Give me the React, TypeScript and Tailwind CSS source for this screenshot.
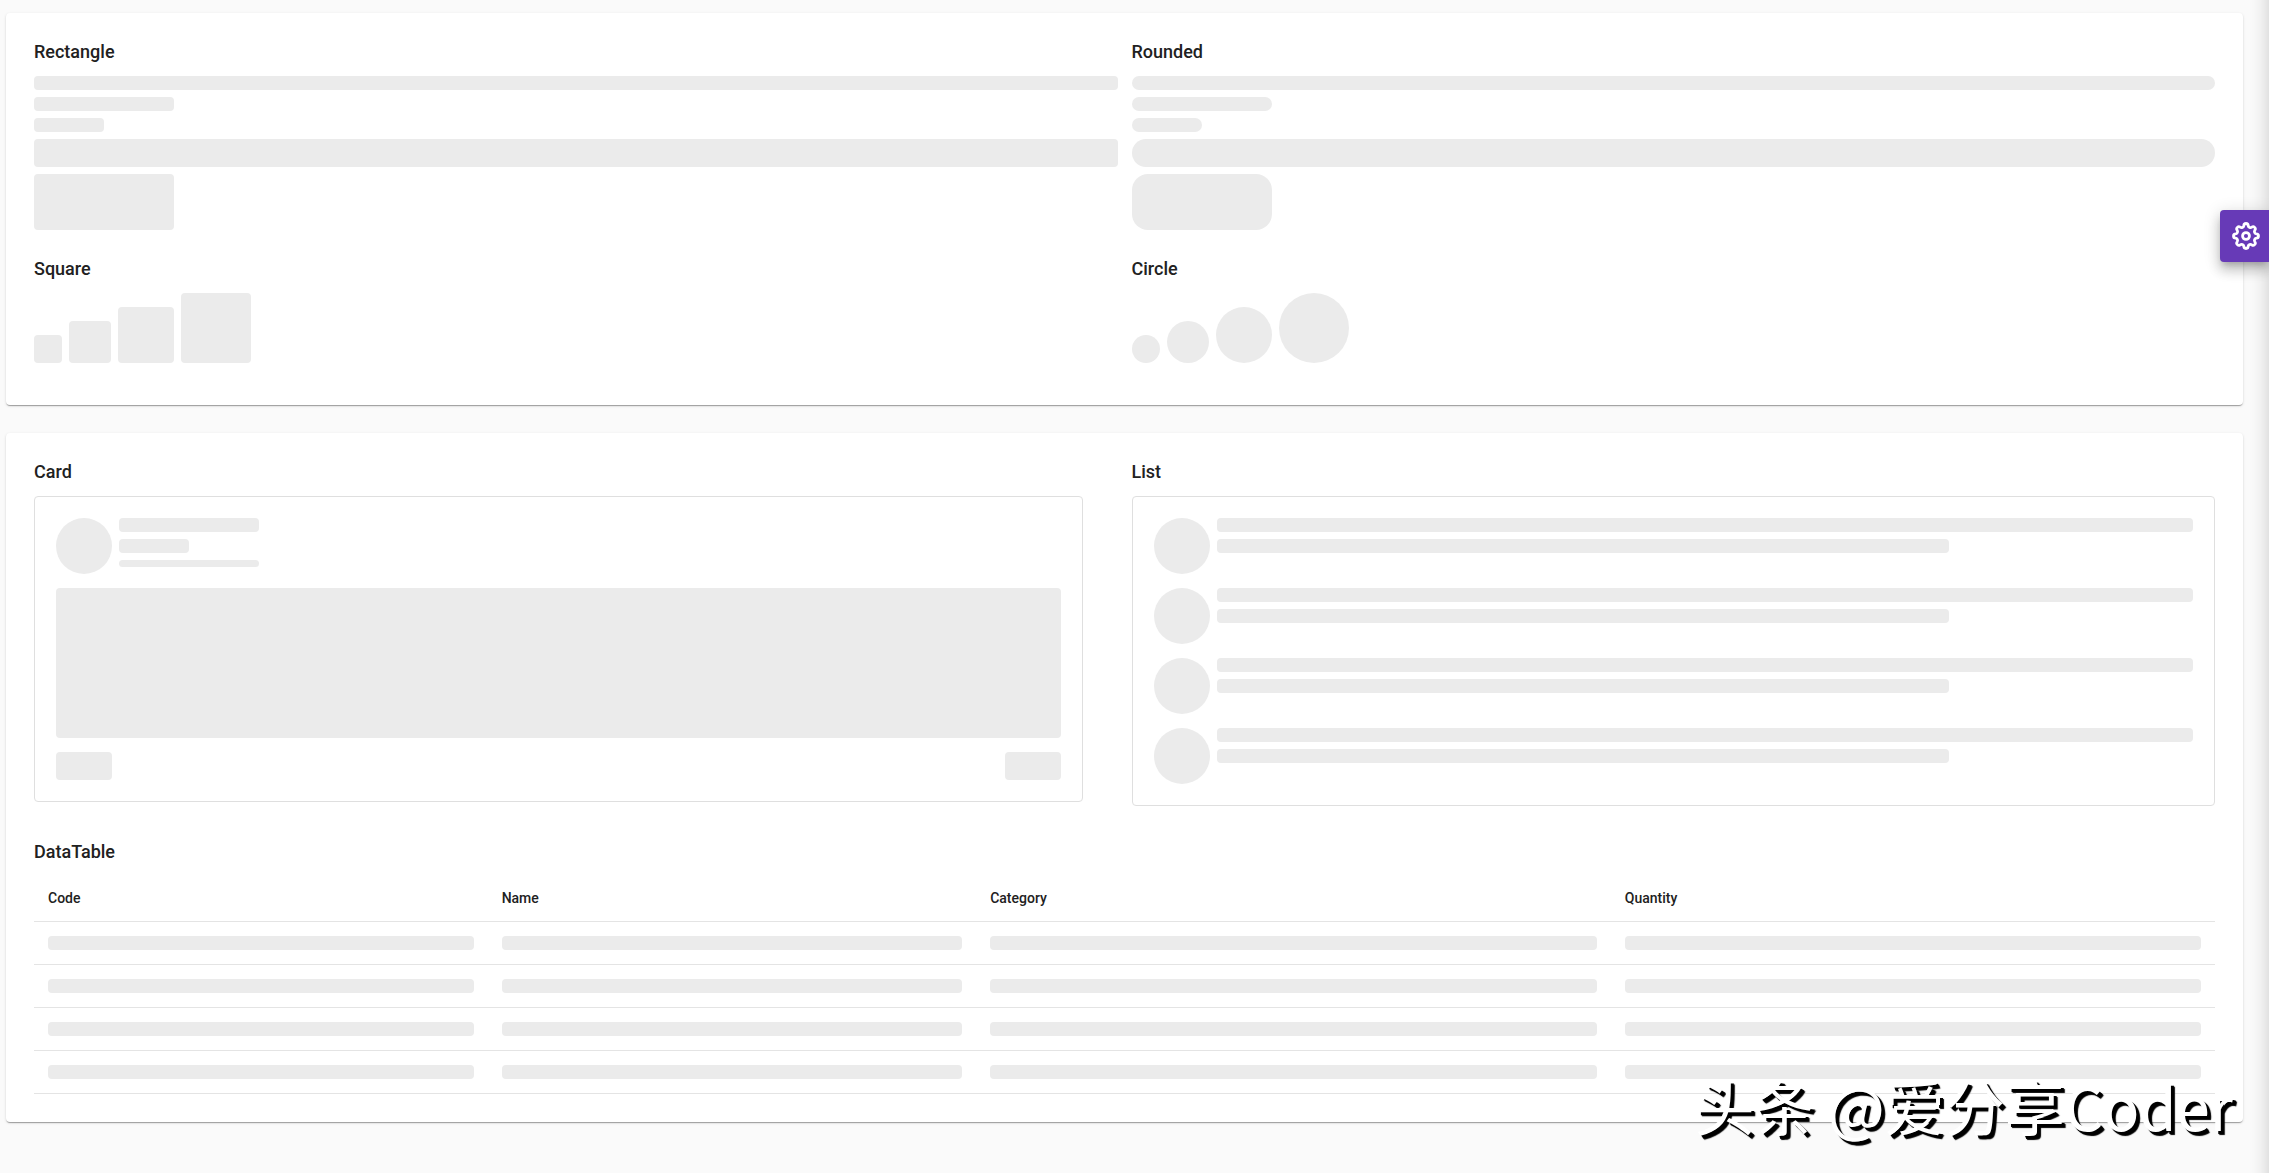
import React from "react";

function Skeleton({ className = "" }: { className?: string }) {
  return <div aria-hidden="true" className={`bg-[#ebebeb] ${className}`} />;
}

function Title({ children }: { children: React.ReactNode }) {
  return <h5 className="mb-3.5 text-lg font-medium leading-[21px] text-[#212121]">{children}</h5>;
}

function Panel({ children }: { children: React.ReactNode }) {
  return (
    <section className="rounded bg-white p-7 shadow-[0px_2px_1px_-1px_rgba(0,0,0,0.2),0px_1px_1px_0px_rgba(0,0,0,0.14),0px_1px_3px_0px_rgba(0,0,0,0.12)]">
      {children}
    </section>
  );
}

function Bars({ shape }: { shape: string }) {
  return (
    <div className="flex flex-col gap-[7px]">
      <Skeleton className={`h-3.5 w-full ${shape}`} />
      <Skeleton className={`h-3.5 w-[140px] ${shape}`} />
      <Skeleton className={`h-3.5 w-[70px] ${shape}`} />
      <Skeleton className={`h-7 w-full ${shape}`} />
      <Skeleton className={`h-14 w-[140px] ${shape}`} />
    </div>
  );
}

function Shapes({ shape }: { shape: string }) {
  return (
    <div className="mb-3.5 flex items-end gap-[7px]">
      <Skeleton className={`size-7 ${shape}`} />
      <Skeleton className={`size-[42px] ${shape}`} />
      <Skeleton className={`size-14 ${shape}`} />
      <Skeleton className={`size-[70px] ${shape}`} />
    </div>
  );
}

function CogIcon() {
  return (
    <svg
      viewBox="0 0 26 26"
      className="size-7"
      fill="none"
      stroke="currentColor"
      strokeWidth="2.6"
      strokeLinejoin="round"
      aria-hidden="true"
    >
      <path d="M11 3.4a2 2 0 0 1 4 0a2.2 2.2 0 0 0 3.4 1.4a2 2 0 0 1 2.8 2.8a2.2 2.2 0 0 0 1.4 3.4a2 2 0 0 1 0 4a2.2 2.2 0 0 0 -1.4 3.4a2 2 0 0 1 -2.8 2.8a2.2 2.2 0 0 0 -3.4 1.4a2 2 0 0 1 -4 0a2.2 2.2 0 0 0 -3.4 -1.4a2 2 0 0 1 -2.8 -2.8a2.2 2.2 0 0 0 -1.4 -3.4a2 2 0 0 1 0 -4a2.2 2.2 0 0 0 1.4 -3.4a2 2 0 0 1 2.8 -2.8a2.2 2.2 0 0 0 3.4 -1.4z" />
      <circle cx="13" cy="13" r="3.2" />
    </svg>
  );
}

const columns = [
  { label: "Code", width: "w-[20.8%]" },
  { label: "Name", width: "w-[22.4%]" },
  { label: "Category", width: "w-[29.1%]" },
  { label: "Quantity", width: "w-[27.7%]" },
];

const rows = [0, 1, 2, 3];

export default function App() {
  return (
    <div className="relative min-h-screen overflow-hidden bg-[#fafafa] font-[Roboto,sans-serif] text-[#212121]">
      <main className="flex flex-col gap-7 pb-7 pl-1.5 pr-[26px] pt-[13px]">
        <Panel>
          <div className="grid grid-cols-2 gap-x-3.5 gap-y-7">
            <div>
              <Title>Rectangle</Title>
              <Bars shape="rounded" />
            </div>
            <div>
              <Title>Rounded</Title>
              <Bars shape="rounded-2xl" />
            </div>
            <div>
              <Title>Square</Title>
              <Shapes shape="rounded" />
            </div>
            <div>
              <Title>Circle</Title>
              <Shapes shape="rounded-full" />
            </div>
          </div>
        </Panel>

        <Panel>
          <div className="mb-[35px] grid grid-cols-2 items-start gap-x-3.5">
            <div className="pr-[35px]">
              <Title>Card</Title>
              <div className="flex flex-col gap-3.5 rounded border border-[#dfdfdf] p-[21px]">
                <div className="flex gap-[7px]">
                  <Skeleton className="size-14 rounded-full" />
                  <div className="flex flex-col gap-[7px]">
                    <Skeleton className="h-3.5 w-[140px] rounded" />
                    <Skeleton className="h-3.5 w-[70px] rounded" />
                    <Skeleton className="h-[7px] w-[140px] rounded" />
                  </div>
                </div>
                <Skeleton className="h-[150px] rounded" />
                <div className="flex justify-between">
                  <Skeleton className="h-7 w-14 rounded" />
                  <Skeleton className="h-7 w-14 rounded" />
                </div>
              </div>
            </div>
            <div>
              <Title>List</Title>
              <ul className="flex flex-col gap-3.5 rounded border border-[#dfdfdf] p-[21px]">
                {rows.map((row) => (
                  <li key={row} className="flex gap-[7px]">
                    <Skeleton className="size-14 shrink-0 rounded-full" />
                    <div className="flex flex-1 flex-col gap-[7px]">
                      <Skeleton className="h-3.5 w-full rounded" />
                      <Skeleton className="h-3.5 w-3/4 rounded" />
                    </div>
                  </li>
                ))}
              </ul>
            </div>
          </div>

          <Title>DataTable</Title>
          <table className="w-full table-fixed border-collapse text-left text-sm">
            <thead>
              <tr className="border-b border-[#e4e4e4]">
                {columns.map((column) => (
                  <th key={column.label} scope="col" className={`p-3.5 font-medium leading-[17px] ${column.width}`}>
                    {column.label}
                  </th>
                ))}
              </tr>
            </thead>
            <tbody>
              {rows.map((row) => (
                <tr key={row} className="border-b border-[#e4e4e4]">
                  {columns.map((column) => (
                    <td key={column.label} className="p-3.5">
                      <Skeleton className="h-3.5 rounded" />
                    </td>
                  ))}
                </tr>
              ))}
            </tbody>
          </table>
        </Panel>
      </main>

      <aside className="absolute -inset-y-10 left-full w-10 shadow-[0px_0px_20px_0px_rgba(0,0,0,0.2)]" />

      <button
        type="button"
        aria-label="Settings"
        className="absolute right-0 top-[210px] flex h-[52px] w-[49px] items-center justify-center rounded-l bg-[#673ab7] pl-0.5 text-white shadow-[0px_5px_6px_-3px_rgba(0,0,0,0.2),0px_9px_12px_1px_rgba(0,0,0,0.14),0px_3px_16px_2px_rgba(0,0,0,0.12)]"
      >
        <CogIcon />
      </button>

      <p className="absolute bottom-9 right-9 whitespace-nowrap font-['Noto_Sans_CJK_SC',sans-serif] text-[60px] leading-[64px] text-white [text-shadow:3px_3px_0_#000,4px_4px_1px_#000]">
        头条 @爱分享Coder
      </p>
    </div>
  );
}
